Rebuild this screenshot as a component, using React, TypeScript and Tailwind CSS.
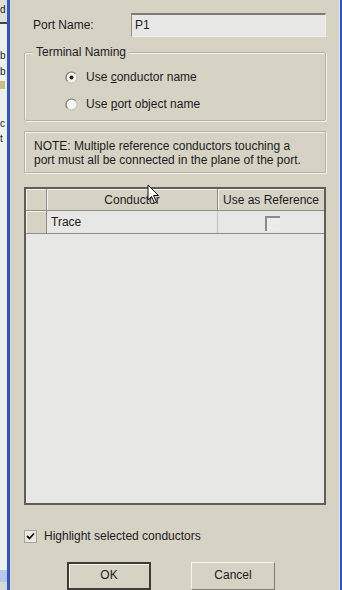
import React from "react";

const font = { fontFamily: '"Liberation Sans", Arial, sans-serif' };

function Radio({ checked }: { checked?: boolean }) {
  return (
    <svg width="13" height="13" viewBox="0 0 13 13" className="shrink-0">
      <circle cx="6.5" cy="6.5" r="5.5" fill="#f4f4f2" stroke="#bdbbb0" strokeWidth="1" />
      <path d="M2.6 10.4 A5.5 5.5 0 0 1 10.4 2.6" fill="none" stroke="#7e7c73" strokeWidth="1.2" />
      {checked && <circle cx="6.5" cy="6.5" r="2" fill="#222" />}
    </svg>
  );
}

function Cursor() {
  return (
    <svg width="13" height="21" viewBox="0 0 13 21" className="absolute left-[147px] top-[184px]">
      <path d="M1 1 L1 16 L4.5 12.5 L7.5 19 L9.5 18 L6.5 11.5 L11.5 11.5 Z" fill="#fff" stroke="#111" strokeWidth="1" strokeLinejoin="round" />
    </svg>
  );
}

export default function App() {
  return (
    <div className="relative flex w-[342px] h-[590px] overflow-hidden text-[12px] text-[#1c1c1c]" style={font}>
      {/* background window strip */}
      <div className="w-[7px] shrink-0 bg-[#eef0ee] flex flex-col text-[10px] leading-none overflow-hidden text-[#222]">
        <div className="h-[22px] bg-[#dedfd8] pt-[5px]">d</div>
        <div className="h-[2px] bg-[#444]" />
        <div className="h-[27px]" />
        <div>b</div>
        <div className="h-[6px]" />
        <div>b</div>
        <div className="h-[4px]" />
        <div className="h-[8px] w-[5px] bg-[#c8c080]" />
        <div className="h-[30px]" />
        <div>c</div>
        <div className="h-[5px]" />
        <div>t</div>
        <div className="flex-1" />
        <div className="h-[12px] bg-[#b7c8e8]" />
        <div className="h-[8px] bg-[#d8d8d4]" />
      </div>
      <div className="w-[3px] shrink-0 bg-[#2b55c9]" />

      {/* dialog */}
      <div className="flex-1 bg-[#d6d3c5] flex flex-col pl-[14px] pr-[13px] pt-[13px]">
        <div className="flex items-center h-[24px]">
          <span className="ml-[9px] w-[98px]">Port Name:</span>
          <div className="flex-1 h-[24px] bg-[#e7e8e5] border-t-2 border-l border-t-[#7c7b74] border-l-[#8e8c84] border-r border-b border-r-[#f0efe8] border-b-[#f0efe8] pl-[3px] pt-[1px] leading-[18px]">
            P1
          </div>
        </div>

        {/* group box */}
        <div className="relative mt-[15px] h-[69px] border border-[#b5b3a8] shadow-[inset_1px_1px_0_#f2f1ea,1px_1px_0_#f2f1ea] rounded-[2px]">
          <span className="absolute -top-[8px] left-[8px] bg-[#d6d3c5] px-[3px] leading-[14px]">Terminal Naming</span>
          <div className="flex flex-col pl-[40px] pt-[17px] gap-[13px]">
            <div className="flex items-center gap-[8px] h-[14px]">
              <Radio checked />
              <span>Use <span className="underline">c</span>onductor name</span>
            </div>
            <div className="flex items-center gap-[8px] h-[14px]">
              <Radio />
              <span>Use <span className="underline">p</span>ort object name</span>
            </div>
          </div>
        </div>

        {/* note */}
        <div className="mt-[10px] h-[43px] border border-[#b5b3a8] shadow-[inset_1px_1px_0_#f2f1ea,1px_1px_0_#f2f1ea] pl-[9px] pt-[7px] leading-[14px]">
          <div>NOTE: Multiple reference conductors touching a</div>
          <div>port must all be connected in the plane of the port.</div>
        </div>

        {/* grid */}
        <div className="mt-[14px] h-[320px] w-[302px] border-2 border-[#5e5d58] bg-[#e7e8e5] flex flex-col">
          <div className="flex h-[22px] border-b border-[#8e8c84]">
            <div className="w-[21px] bg-[#d6d3c5] border-r border-[#8e8c84] shadow-[inset_1px_1px_0_#f4f3ec]" />
            <div className="w-[171px] bg-[#d6d3c5] border-r border-[#8e8c84] shadow-[inset_1px_1px_0_#f4f3ec] flex items-center justify-center">
              Conductor
            </div>
            <div className="flex-1 bg-[#d6d3c5] shadow-[inset_1px_1px_0_#f4f3ec] flex items-center justify-center">
              Use as Reference
            </div>
          </div>
          <div className="flex h-[23px] border-b border-[#8e8c84]">
            <div className="w-[21px] bg-[#d6d3c5] border-r border-[#8e8c84] shadow-[inset_1px_1px_0_#f4f3ec]" />
            <div className="w-[171px] border-r border-[#c4c3bc] flex items-center pl-[4px]">Trace</div>
            <div className="flex-1 flex items-center justify-center">
              <div className="w-[15px] h-[15px] border-t-2 border-l-2 border-t-[#8a8a86] border-l-[#8a8a86] bg-[#ececea] ml-[2px] mt-[2px]" />
            </div>
          </div>
        </div>

        {/* highlight checkbox */}
        <div className="mt-[24px] flex items-center gap-[7px] h-[14px]">
          <div className="w-[13px] h-[13px] border border-[#a6a49a] bg-[#e9e8e2] flex items-center justify-center">
            <svg width="9" height="8" viewBox="0 0 9 8">
              <path d="M1 4 L3.5 6.5 L8 1.5" fill="none" stroke="#111" strokeWidth="1.8" />
            </svg>
          </div>
          <span>Highlight selected conductors</span>
        </div>

        {/* buttons */}
        <div className="mt-[19px] flex">
          <div className="ml-[43px] w-[84px] h-[28px] border-2 border-[#3c3b38] bg-[#d6d3c5] shadow-[inset_1px_1px_0_#f4f3ec] flex items-center justify-center pb-[2px]">
            OK
          </div>
          <div className="ml-[40px] w-[84px] h-[28px] border border-[#7c7b74] border-t-[#f4f3ec] border-l-[#f4f3ec] bg-[#d6d3c5] flex items-center justify-center pb-[2px]">
            Cancel
          </div>
        </div>
      </div>

      <div className="w-[1px] shrink-0 bg-[#e8e6dc]" />
      <div className="w-[2px] shrink-0 bg-[#2b55c9]" />
      <Cursor />
    </div>
  );
}
